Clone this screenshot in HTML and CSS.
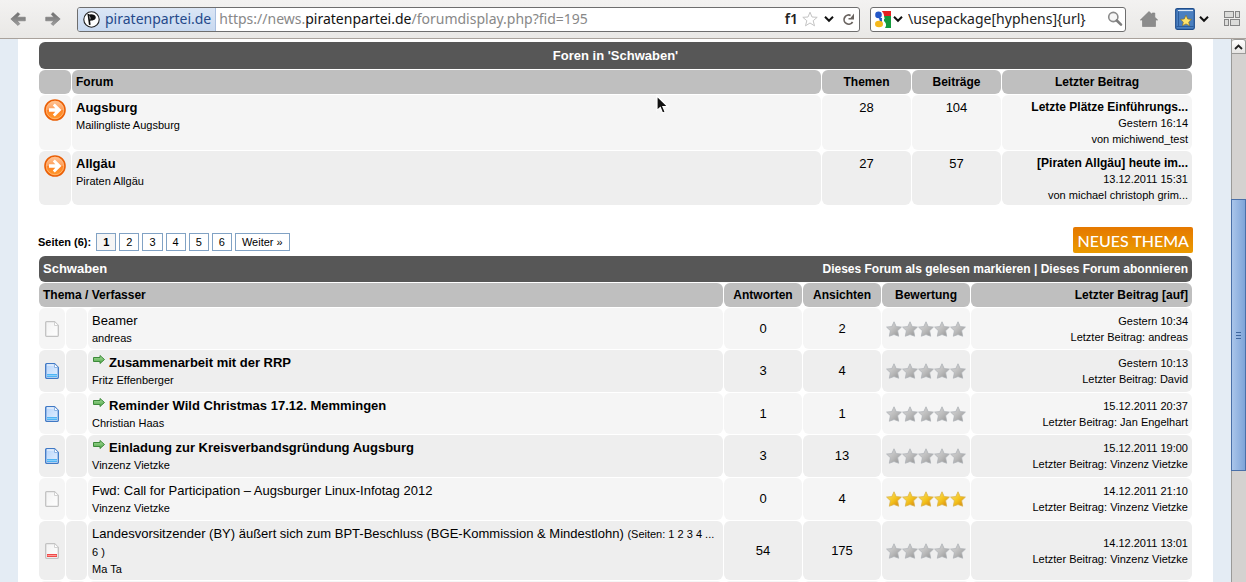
FILE: index.html
```
<!DOCTYPE html>
<html lang="de">
<head>
<meta charset="utf-8">
<title>Schwaben</title>
<link rel="stylesheet" href="styles.css">
</head>
<body>
<svg class="defs" aria-hidden="true">
  <defs>
    <linearGradient id="g-grey" x1="0" y1="0" x2="1" y2="1"><stop offset="0" stop-color="#dedede"/><stop offset=".55" stop-color="#b9b9b9"/><stop offset="1" stop-color="#8f8f8f"/></linearGradient>
    <linearGradient id="g-gold" x1="0" y1="0" x2="1" y2="1"><stop offset="0" stop-color="#ffe96a"/><stop offset=".55" stop-color="#f3c11b"/><stop offset="1" stop-color="#d07a10"/></linearGradient>
    <linearGradient id="g-orange" x1="0" y1="0" x2="0" y2="1"><stop offset="0" stop-color="#ffc79c"/><stop offset=".5" stop-color="#ff9c54"/><stop offset=".52" stop-color="#ff8428"/><stop offset="1" stop-color="#ff9a2a"/></linearGradient>
    <linearGradient id="g-green" x1="0" y1="0" x2="0" y2="1"><stop offset="0" stop-color="#a6dd9a"/><stop offset="1" stop-color="#4fa548"/></linearGradient>
    <linearGradient id="g-arrow" x1="0" y1="0" x2="0" y2="1"><stop offset="0" stop-color="#6d6d6d"/><stop offset="1" stop-color="#a0a0a0"/></linearGradient>
    <linearGradient id="g-sheet" x1="0" y1="0" x2="1" y2="1"><stop offset="0" stop-color="#f2f2f2"/><stop offset="1" stop-color="#ffffff"/></linearGradient>
    <linearGradient id="g-blue" x1="0" y1="0" x2="1" y2="1"><stop offset="0" stop-color="#b7d5fb"/><stop offset="1" stop-color="#e4f0ff"/></linearGradient>
  </defs>
  <symbol id="star" viewBox="0 0 16 16"><path d="M8 .8 10.2 5.6 15.4 6.1 11.6 9.7 12.7 15.2 8 13.500 3.3 15.2 4.4 9.7.6 6.1 5.8 5.6Z" stroke-width=".8" stroke-linejoin="round"/></symbol>
  <symbol id="go" viewBox="0 0 22 22"><circle cx="11" cy="11" r="10" fill="url(#g-orange)" stroke="#ea5f06" stroke-width="1.6"/><circle cx="11" cy="11" r="8.7" fill="none" stroke="#ffc08a" stroke-width=".7"/><path d="M5 9.200h6.300L8.800 6.500l2-2.100L17.400 11l-6.600 6.600-2-2.100 2.500-2.700H5z" fill="#fff"/></symbol>
  <symbol id="sheet" viewBox="0 0 14 16"><path d="M1.500.700h8l3.800 3.800v10a.8.8 0 0 1-.8.8h-11a.8.8 0 0 1-.8-.8v-13a.8.8 0 0 1 .8-.8z" fill="url(#g-sheet)" stroke="#c2c2c2" stroke-width="1.300"/><path d="M9.500.900v3.600h3.600" fill="#fff" stroke="#d2d2d2"/></symbol>
  <symbol id="sheet-new" viewBox="0 0 14 16"><path d="M1.500.700h8l3.800 3.800v10a.8.8 0 0 1-.8.8h-11a.8.8 0 0 1-.8-.8v-13a.8.8 0 0 1 .8-.8z" fill="url(#g-blue)" stroke="#3f78c4" stroke-width="1.300"/><path d="M1.900 1.900h6.900" stroke="#fff"/><path d="M9.500.900v3.600h3.600" fill="#fff" stroke="#8fb6e6"/><path d="M2 12.500h10" stroke="#4fb4f5" stroke-width="3"/><path d="M2 12.500h10" stroke="#8ad0fb"/></symbol>
  <symbol id="sheet-hot" viewBox="0 0 14 16"><path d="M1.500.700h8l3.800 3.800v10a.8.8 0 0 1-.8.8h-11a.8.8 0 0 1-.8-.8v-13a.8.8 0 0 1 .8-.8z" fill="url(#g-sheet)" stroke="#c2c2c2" stroke-width="1.300"/><path d="M9.500.900v3.600h3.600" fill="#fff" stroke="#d2d2d2"/><path d="M2 12.500h10" stroke="#ef4b4b" stroke-width="3"/><path d="M2.500 12.500h9" stroke="#ff9a94"/></symbol>
  <symbol id="jump" viewBox="0 0 12 9"><path d="M.500 2.500h6.500v-2L11.500 4.500 7 8.500v-2H.500z" fill="url(#g-green)" stroke="#3d8a3a" stroke-width="1"/></symbol>
  <symbol id="chev" viewBox="0 0 10 8"><path d="M1 1.800 5 5.800 9 1.800" fill="none" stroke="#111" stroke-width="2"/></symbol>
  <symbol id="stars" viewBox="0 0 80 16"><use href="#star" width="16" height="16"/><use href="#star" x="16" width="16" height="16"/><use href="#star" x="32" width="16" height="16"/><use href="#star" x="48" width="16" height="16"/><use href="#star" x="64" width="16" height="16"/></symbol>
</svg>

<header class="toolbar">
  <button class="tool nav" aria-label="Zurück"><svg width="16" height="16" viewBox="0 0 16 16"><path d="M8 1.500 9.800 3.300 7.200 6.200H15.300v3.600H7.200L9.800 12.700 8 14.500.8 8z" fill="url(#g-arrow)" stroke="#777" stroke-width=".6"/></svg></button>
  <button class="tool nav" aria-label="Vor"><svg width="16" height="16" viewBox="0 0 16 16"><path d="M8 1.500 6.200 3.300 8.800 6.200H.7v3.600H8.800L6.200 12.700 8 14.500 15.200 8z" fill="url(#g-arrow)" stroke="#777" stroke-width=".6"/></svg></button>
  <div class="field address">
    <button class="identity"><svg width="17" height="17" viewBox="0 0 17 17"><circle cx="8.500" cy="8.500" r="7.700" fill="#fff" stroke="#222" stroke-width="1.100"/><path d="M5.300 3 6.800 13.800" stroke="#111" stroke-width="1.700"/><path d="M5.200 3.800C8 2.400 12.800 3.400 12.800 6.300S9.300 9.800 6.200 9.800C8 8.600 8 5.500 5.200 3.800z" fill="#111"/></svg><span>piratenpartei.de</span></button>
    <div class="url" role="textbox" aria-label="Adresse" contenteditable="true" spellcheck="false">https://news.<b>piratenpartei.de</b>/forumdisplay.php?fid=195</div>
    <span class="keyword">f1</span>
    <button class="tool" aria-label="Lesezeichen"><svg width="16" height="16" viewBox="0 0 16 16"><path d="M8 1.200 10 6 15.200 6.300 11.200 9.700 12.500 14.800 8 12 3.500 14.800 4.800 9.700.8 6.300 6 6z" fill="#fff" stroke="#c4c4c4"/></svg></button>
    <button class="tool drop" aria-label="Verlauf"><svg width="10" height="8"><use href="#chev"/></svg></button>
    <button class="tool reload" aria-label="Neu laden"><svg width="13" height="13" viewBox="0 0 13 13"><path d="M8.600 2.400A4.600 4.600 0 1 0 10.600 9" fill="none" stroke="#6a6460" stroke-width="1.700"/><path d="M12 0.500v6H6.500V5H8.500z" fill="#6a6460"/></svg></button>
  </div>
  <div class="field search">
    <button class="tool engine" aria-label="Suchmaschine"><svg width="17" height="17" viewBox="0 0 17 17"><rect width="17" height="17" fill="#fff"/><path d="M8 0h9v5H10z" fill="#e62020"/><path d="M10 5h7v12h-6c2-3 1-5-1-7z" fill="#159a3c"/><circle cx="4.500" cy="3.900" r="3.300" fill="#2458c8"/><path d="M5 7h3v4H6z" fill="#2458c8"/><ellipse cx="5" cy="13" rx="4" ry="3.200" fill="#f5b81c"/><path d="M8.500 1.500 10 7.500 8 9" stroke="#fff" stroke-width="1.200" fill="none"/></svg><svg width="10" height="8"><use href="#chev"/></svg></button>
    <input class="query" type="text" aria-label="Suche" spellcheck="false" value="\usepackage[hyphens]{url}">
    <button class="tool" aria-label="Suchen"><svg width="16" height="16" viewBox="0 0 16 16"><circle cx="6.300" cy="6" r="4.600" fill="#f6f6f6" stroke="#8b8b8b" stroke-width="1.600"/><path d="M9.800 9.500 14 13.700" stroke="#7d7d7d" stroke-width="2.600" stroke-linecap="round"/></svg></button>
  </div>
  <button class="tool home" aria-label="Startseite"><svg width="18" height="16" viewBox="0 0 18 16"><path d="M9 .5 12.200 3.600V2h2.600v4.200L17.700 9H15.500v6.500H2.500V9H.3z" fill="#8c8c8c" stroke="#7b7b7b" stroke-width=".6"/></svg></button>
  <button class="tool marks" aria-label="Lesezeichen-Menü"><svg width="20" height="22" viewBox="0 0 20 22"><rect x=".700" y=".700" width="18.600" height="20.600" rx="1.500" fill="#4a7fc0" stroke="#1e4d8c" stroke-width="1.200"/><path d="M3.500 1v17.500M1.500 18.500h17" stroke="#2b5c9c"/><path d="M3 2.500h15" stroke="#dfe9f6" stroke-width="1.200"/><path d="M11 7.200 12.700 11 16.500 11.400 13.700 14 14.500 17.700 11 15.900 7.500 17.700 8.300 14 5.500 11.400 9.300 11z" fill="#ffe36b" stroke="#8a6a12" stroke-width=".6"/></svg><svg width="10" height="8"><use href="#chev"/></svg></button>
  <button class="tool groups" aria-label="Tab-Gruppen"><svg width="16" height="16" viewBox="0 0 16 16" fill="#dcdcda" stroke="#858585"><rect x=".5" y=".5" width="9" height="6"/><rect x="11.500" y=".5" width="4" height="6"/><rect x=".5" y="8.500" width="4" height="6"/><rect x="6.500" y="8.500" width="9" height="6"/></svg></button>
</header>

<div class="viewport">
  <main class="page">
    <table class="board forums">
      <colgroup><col class="c-icon"><col><col class="c-count"><col class="c-count"><col class="c-last"></colgroup>
      <thead>
        <tr class="title"><th colspan="5">Foren in 'Schwaben'</th></tr>
        <tr class="cols"><th></th><th class="left">Forum</th><th>Themen</th><th>Beiträge</th><th>Letzter Beitrag</th></tr>
      </thead>
      <tbody>
        <tr>
          <td class="mid"><svg class="go" width="22" height="22"><use href="#go"/></svg></td>
          <td><a class="name" href="#"><b>Augsburg</b></a><div class="small">Mailingliste Augsburg</div></td>
          <td class="mid num">28</td><td class="mid num">104</td>
          <td class="last"><a href="#"><b>Letzte Plätze Einführungs...</b></a><br>Gestern 16:14<br>von <a href="#">michiwend_test</a></td>
        </tr>
        <tr>
          <td class="mid"><svg class="go" width="22" height="22"><use href="#go"/></svg></td>
          <td><a class="name" href="#"><b>Allgäu</b></a><div class="small">Piraten Allgäu</div></td>
          <td class="mid num">27</td><td class="mid num">57</td>
          <td class="last"><a href="#"><b>[Piraten Allgäu] heute im...</b></a><br>13.12.2011 15:31<br>von <a href="#">michael christoph grim...</a></td>
        </tr>
      </tbody>
    </table>

    <div class="actions">
      <nav class="pager"><b>Seiten (6):</b><a class="current" href="#">1</a><a href="#">2</a><a href="#">3</a><a href="#">4</a><a href="#">5</a><a href="#">6</a><a class="next" href="#">Weiter »</a></nav>
      <a class="new-thread" href="#">NEUES THEMA</a>
    </div>

    <table class="board threads">
      <colgroup><col class="c-state"><col class="c-mark"><col><col class="c-stat"><col class="c-stat"><col class="c-rating"><col class="c-post"></colgroup>
      <thead>
        <tr class="title"><th colspan="7"><div class="bar"><span>Schwaben</span><span class="links"><a href="#">Dieses Forum als gelesen markieren</a> | <a href="#">Dieses Forum abonnieren</a></span></div></th></tr>
        <tr class="cols"><th class="left" colspan="3"><a href="#">Thema</a> / <a href="#">Verfasser</a></th><th>Antworten</th><th>Ansichten</th><th>Bewertung</th><th class="right">Letzter Beitrag [<a href="#">auf</a>]</th></tr>
      </thead>
      <tbody>
        <tr>
          <td class="mid"><svg class="state" width="14" height="16"><use href="#sheet"/></svg></td><td></td>
          <td><a class="name" href="#">Beamer</a><div class="small"><a href="#">andreas</a></div></td>
          <td class="mid num">0</td><td class="mid num">2</td><td class="mid"><svg class="stars" width="80" height="16"><use href="#stars"/></svg></td>
          <td class="last">Gestern 10:34<br><a href="#">Letzter Beitrag</a>: <a href="#">andreas</a></td>
        </tr>
        <tr>
          <td class="mid"><svg class="state" width="14" height="16"><use href="#sheet-new"/></svg></td><td></td>
          <td><svg class="jump" width="12" height="9"><use href="#jump"/></svg><a class="name" href="#"><b>Zusammenarbeit mit der RRP</b></a><div class="small"><a href="#">Fritz Effenberger</a></div></td>
          <td class="mid num">3</td><td class="mid num">4</td><td class="mid"><svg class="stars" width="80" height="16"><use href="#stars"/></svg></td>
          <td class="last">Gestern 10:13<br><a href="#">Letzter Beitrag</a>: <a href="#">David</a></td>
        </tr>
        <tr>
          <td class="mid"><svg class="state" width="14" height="16"><use href="#sheet-new"/></svg></td><td></td>
          <td><svg class="jump" width="12" height="9"><use href="#jump"/></svg><a class="name" href="#"><b>Reminder Wild Christmas 17.12. Memmingen</b></a><div class="small"><a href="#">Christian Haas</a></div></td>
          <td class="mid num">1</td><td class="mid num">1</td><td class="mid"><svg class="stars" width="80" height="16"><use href="#stars"/></svg></td>
          <td class="last">15.12.2011 20:37<br><a href="#">Letzter Beitrag</a>: <a href="#">Jan Engelhart</a></td>
        </tr>
        <tr>
          <td class="mid"><svg class="state" width="14" height="16"><use href="#sheet-new"/></svg></td><td></td>
          <td><svg class="jump" width="12" height="9"><use href="#jump"/></svg><a class="name" href="#"><b>Einladung zur Kreisverbandsgründung Augsburg</b></a><div class="small"><a href="#">Vinzenz Vietzke</a></div></td>
          <td class="mid num">3</td><td class="mid num">13</td><td class="mid"><svg class="stars" width="80" height="16"><use href="#stars"/></svg></td>
          <td class="last">15.12.2011 19:00<br><a href="#">Letzter Beitrag</a>: <a href="#">Vinzenz Vietzke</a></td>
        </tr>
        <tr>
          <td class="mid"><svg class="state" width="14" height="16"><use href="#sheet"/></svg></td><td></td>
          <td><a class="name" href="#">Fwd: Call for Participation – Augsburger Linux-Infotag 2012</a><div class="small"><a href="#">Vinzenz Vietzke</a></div></td>
          <td class="mid num">0</td><td class="mid num">4</td><td class="mid"><svg class="stars gold" width="80" height="16"><use href="#stars"/></svg></td>
          <td class="last">14.12.2011 21:10<br><a href="#">Letzter Beitrag</a>: <a href="#">Vinzenz Vietzke</a></td>
        </tr>
        <tr>
          <td class="mid"><svg class="state" width="14" height="16"><use href="#sheet-hot"/></svg></td><td></td>
          <td><a class="name" href="#">Landesvorsitzender (BY) äußert sich zum BPT-Beschluss (BGE-Kommission &amp; Mindestlohn)</a> <span class="pages">(Seiten: <a href="#">1</a> <a href="#">2</a> <a href="#">3</a> <a href="#">4</a> ...<br><a href="#">6</a> )</span><div class="small"><a href="#">Ma Ta</a></div></td>
          <td class="mid num">54</td><td class="mid num">175</td><td class="mid"><svg class="stars" width="80" height="16"><use href="#stars"/></svg></td>
          <td class="last">14.12.2011 13:01<br><a href="#">Letzter Beitrag</a>: <a href="#">Vinzenz Vietzke</a></td>
        </tr>
        <tr><td></td><td></td><td></td><td></td><td></td><td></td><td></td></tr>
      </tbody>
    </table>
  </main>
  <div class="scrollbar">
    <button class="up" aria-label="Nach oben"><svg width="9" height="6" viewBox="0 0 9 6"><path d="M1 5 4.500 1.500 8 5" fill="none" stroke="#222" stroke-width="1.800"/></svg></button>
    <div class="thumb"><i></i><i></i><i></i></div>
  </div>
</div>
<svg class="pointer" width="13" height="19" viewBox="0 0 13 19" aria-hidden="true"><path d="M1 1v14.500l3.300-3L6.500 18l2.700-1-2.300-5.300H12z" fill="#111" stroke="#fff" stroke-width="1.200"/></svg>
</body>
</html>
```
FILE: styles.css
```
* { box-sizing: border-box; }

body {
  margin: 0;
  height: 100vh;
  overflow: hidden;
  display: flex;
  flex-direction: column;
  background: #fff;
  color: #000;
  font: 13px/18px "Liberation Sans", Arial, sans-serif;
}

a { color: inherit; text-decoration: none; }
button { font: inherit; border: 0; background: none; padding: 0; }
svg { display: block; }
.defs { position: absolute; width: 0; height: 0; }

/* Browser toolbar */
.toolbar {
  flex: none;
  height: 39px;
  display: flex;
  align-items: center;
  padding: 0 6px 0 10px;
  background: linear-gradient(#f3f2f1, #e9e8e6);
  border-bottom: 1px solid #a9a29c;
  font: 14px/20px "Noto Sans", "Open Sans", sans-serif;
}
.tool { display: flex; align-items: center; flex: none; }
.nav { margin-right: 19px; }
.nav + .nav { margin-right: 16px; }
.field {
  display: flex;
  align-items: center;
  height: 25px;
  border: 1px solid #6e6e6e;
  border-radius: 3px;
  background: #fff;
}
.address { flex: 1; min-width: 0; padding-right: 4px; }
.identity {
  display: flex;
  align-items: center;
  gap: 5px;
  height: 23px;
  padding: 0 4px 0 5px;
  background: linear-gradient(#dbe6f5, #c8d9f0);
  border-right: 1px solid #a9bfdf;
  border-radius: 2px 0 0 2px;
  color: #25498a;
}
.url { flex: 1; min-width: 0; margin-left: 3px; color: #888; white-space: nowrap; overflow: hidden; outline: 0; }
.url b { font-weight: 400; color: #111; }
.keyword { font-weight: 600; color: #222; margin-right: 4px; }
.drop { margin: 0 8px 0 6px; }
.search { width: 256px; margin: 0 14px 0 10px; padding: 0 2px 0 3px; }
.engine { gap: 2px; }
.query {
  flex: 1;
  min-width: 0;
  margin-left: 5px;
  padding: 0;
  border: 0;
  outline: 0;
  background: none;
  color: #222;
  font: inherit;
}
.home { margin-right: 17px; }
.marks { gap: 4px; margin-right: 15px; }

/* Scrolled page */
.viewport { flex: 1; min-height: 0; display: flex; background: #e4ecf4; }
.page {
  flex: 1;
  min-width: 0;
  margin: 0 18px;
  padding: 2px 20px;
  overflow: hidden;
  background: #fff;
}

.board { width: 100%; table-layout: fixed; border-collapse: separate; border-spacing: 1px; }
.board th, .board td { border-radius: 6px; padding: 0 4px; }
.c-icon { width: 32px; }
.c-count { width: 89px; }
.c-last { width: 190px; }
.c-state { width: 26px; }
.c-mark { width: 21px; }
.c-stat { width: 78px; }
.c-rating { width: 88px; }
.c-post { width: 221px; }

.title th { height: 27px; background: #575757; color: #fff; font-size: 13px; }
.threads .title th { height: 26px; }
.cols th { height: 24px; background: #bfbfbf; font-size: 12px; }
.board .left { text-align: left; }
.board .right { text-align: right; }
.bar { display: flex; justify-content: space-between; }
.links { font-size: 12px; }

.board td { background: #f5f5f5; }
.board tbody tr:nth-child(even) td { background: #eee; }
.forums td { height: 55px; vertical-align: top; padding-top: 4px; }
.forums tr:nth-child(even) td { height: 54px; }
.threads td { height: 41px; }
.threads tr:nth-child(even) td { height: 42px; }
.threads tbody tr:nth-child(5) td { height: 42px; }
.threads tbody tr:nth-child(6) td { height: 59px; }
.mid { text-align: center; }
.go, .state, .stars { margin: 0 auto; }
.board .last { text-align: right; font-size: 11px; line-height: 16px; }
.last b { font-size: 12px; }
.name { font-size: 13px; }
.small { font-size: 11px; line-height: 16px; }
.pages { font-size: 11px; }
.jump { display: inline-block; vertical-align: 3px; margin: 0 4px 0 1px; }
.stars { fill: url(#g-grey); stroke: #aeb2b8; margin-left: 0; }
.gold { fill: url(#g-gold); stroke: #d9b24a; }

.actions { display: flex; align-items: center; justify-content: space-between; margin: 21px 0 2px; }
.pager { display: flex; align-items: center; gap: 3px; font-size: 11px; padding-top: 4px; }
.pager > b { margin-right: 2px; }
.pager a {
  min-width: 20px;
  padding: 0 6px;
  border: 1px solid #81a2c4;
  line-height: 16px;
  text-align: center;
}
.pager .current { background: #f5f5f5; font-weight: 700; }
.new-thread {
  height: 26px;
  padding: 0 4px;
  border-radius: 2px;
  background: linear-gradient(#e57800, #ea9a00);
  color: #fff;
  font: 500 16px/28px Lato, sans-serif;
}

/* Scrollbar */
.scrollbar {
  flex: none;
  width: 15px;
  display: grid;
  grid-template-rows: 15px 272px;
  row-gap: 145px;
  background: #d4d2d0;
  border-left: 1px solid #9a9a98;
}
.up {
  display: flex;
  align-items: center;
  justify-content: center;
  background: linear-gradient(#fff, #e6e5e3);
  border: 1px solid #9a9a98;
  border-left: 0;
  border-radius: 3px 3px 0 0;
}
.thumb {
  display: flex;
  flex-direction: column;
  align-items: center;
  justify-content: center;
  gap: 2px;
  margin-left: -1px;
  border: 1px solid #4a70a8;
  background: linear-gradient(90deg, #a9c5ea, #7ea4d8);
}
.thumb i { width: 5px; height: 1px; background: #3f679f; }

.pointer { position: absolute; left: 656px; top: 95px; }
```
